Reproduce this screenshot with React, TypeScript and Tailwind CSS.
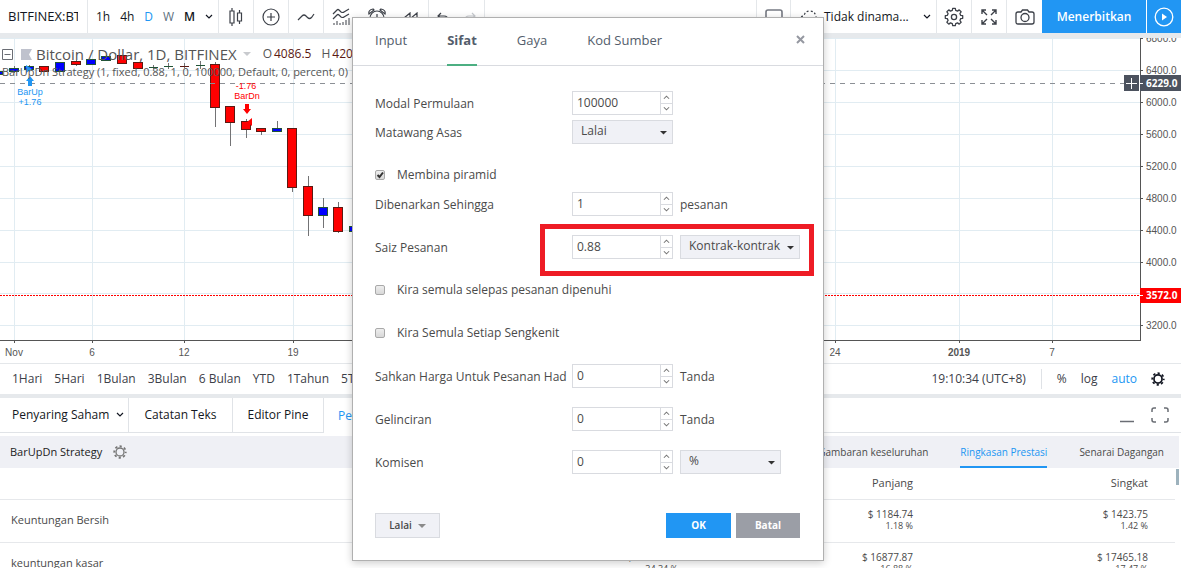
import type { ReactNode } from "react";
import clsx from "clsx";

// x is the candle centre, the rest are pixel offsets from the top of the chart
interface Candle {
  x: number;
  top: number;
  bottom: number;
  high: number;
  low: number;
  up: boolean;
}

const CANDLES: Candle[] = [
  { x: -2, top: 34, bottom: 36, high: 33, low: 37, up: true },
  { x: 14, top: 31, bottom: 33, high: 28, low: 35, up: true },
  { x: 29, top: 29, bottom: 31, high: 27, low: 33, up: true },
  { x: 44, top: 29, bottom: 33, high: 28, low: 33, up: false },
  { x: 60, top: 25, bottom: 33, high: 24, low: 33, up: true },
  { x: 76, top: 24, bottom: 26, high: 22, low: 28, up: false },
  { x: 91, top: 22, bottom: 26, high: 21, low: 27, up: true },
  { x: 106, top: 19, bottom: 22, high: 17, low: 23, up: true },
  { x: 122, top: 18, bottom: 25, high: 17, low: 26, up: false },
  { x: 138, top: 25, bottom: 30, high: 24, low: 31, up: false },
  { x: 153, top: 29, bottom: 29, high: 27, low: 31, up: true },
  { x: 168, top: 28, bottom: 28, high: 25, low: 31, up: true },
  { x: 184, top: 28, bottom: 28, high: 25, low: 30, up: false },
  { x: 200, top: 27, bottom: 27, high: 23, low: 31, up: true },
  { x: 215, top: 27, bottom: 69, high: 24, low: 89, up: false },
  { x: 230, top: 69, bottom: 84, high: 68, low: 108, up: false },
  { x: 246, top: 84, bottom: 91, high: 81, low: 100, up: false },
  { x: 261, top: 91, bottom: 93, high: 90, low: 97, up: false },
  { x: 277, top: 91, bottom: 93, high: 83, low: 93, up: true },
  { x: 292, top: 91, bottom: 149, high: 90, low: 154, up: false },
  { x: 308, top: 149, bottom: 177, high: 138, low: 198, up: false },
  { x: 323, top: 170, bottom: 177, high: 160, low: 190, up: true },
  { x: 338, top: 170, bottom: 193, high: 164, low: 195, up: false },
  { x: 354, top: 189, bottom: 193, high: 186, low: 196, up: true },
];

const PRICES = [
  { y: 0, label: "6800.0" },
  { y: 32, label: "6400.0" },
  { y: 64, label: "6000.0" },
  { y: 96, label: "5600.0" },
  { y: 128, label: "5200.0" },
  { y: 160, label: "4800.0" },
  { y: 192, label: "4400.0" },
  { y: 224, label: "4000.0" },
  { y: 255, label: "" },
  { y: 287, label: "3200.0" },
];

const DATES = [
  { x: 14, label: "Nov" },
  { x: 92, label: "6" },
  { x: 184, label: "12" },
  { x: 293, label: "19" },
  { x: 835, label: "24" },
  { x: 959, label: "2019", bold: true },
  { x: 1052, label: "7" },
];

const RANGES = ["1Hari", "5Hari", "1Bulan", "3Bulan", "6 Bulan", "YTD", "1Tahun", "5Tahun"];

const RESULTS = [
  {
    label: "Keuntungan Bersih",
    values: [
      ["$ 2608.49", "2.61 %"],
      ["$ 1184.74", "1.18 %"],
      ["$ 1423.75", "1.42 %"],
    ],
  },
  {
    label: "keuntungan kasar",
    values: [
      ["$ 34343.05", "34.34 %"],
      ["$ 16877.87", "16.88 %"],
      ["$ 17465.18", "17.47 %"],
    ],
  },
];

function Chevron({ className }: { className?: string }) {
  return (
    <svg className={className} width="8" height="6" viewBox="0 0 8 6" fill="none" stroke="currentColor" strokeWidth="1.2">
      <path d="M1 1l3 3 3-3" />
    </svg>
  );
}

function Gear({ size, teeth, width }: { size: number; teeth: string; width: number }) {
  return (
    <svg width={size} height={size} viewBox="0 0 16 16" fill="none" stroke="currentColor">
      <circle cx="8" cy="8" r="4.6" strokeWidth={width} />
      <circle cx="8" cy="8" r="6.6" strokeWidth="2" strokeDasharray={teeth} strokeDashoffset="1.3" />
    </svg>
  );
}

function ToolButton({ label, className, children }: { label: string; className?: string; children: ReactNode }) {
  return (
    <button
      type="button"
      aria-label={label}
      className={clsx("flex w-[35px] shrink-0 items-center justify-center border-[#e4e7ea] text-[#3c4048]", className)}
    >
      {children}
    </button>
  );
}

function Toolbar() {
  return (
    <header className="flex h-[33px] shrink-0 items-stretch overflow-hidden bg-white text-[12px] text-[#131722]">
      <div className="flex w-[88px] shrink-0 items-center border-r border-[#e4e7ea] pl-2">
        <input aria-label="Simbol" defaultValue="BITFINEX:BTCUSD" className="w-[70px] bg-transparent text-[13px] outline-none" />
      </div>
      <div className="flex w-[131px] shrink-0 items-center justify-between border-r border-[#e4e7ea] pr-[5px] pl-2">
        <button type="button">1h</button>
        <button type="button">4h</button>
        <button type="button" className="text-[#2196f3]">D</button>
        <button type="button" className="text-[#5d7080]">W</button>
        <button type="button" className="font-semibold">M</button>
        <button type="button" aria-label="Selang masa"><Chevron /></button>
      </div>
      <ToolButton label="Gaya carta" className="border-r">
        <svg width="14" height="18" viewBox="0 0 14 18" fill="none" stroke="currentColor" strokeWidth="1.2">
          <path d="M3 0v3M3 15v3M10.500 2v3M10.500 13v3" />
          <path d="M1 3h4v12H1zM8.500 5h4v8h-4z" />
        </svg>
      </ToolButton>
      <ToolButton label="Bandingkan" className="border-r">
        <svg width="18" height="18" viewBox="0 0 18 18" fill="none" stroke="currentColor" strokeWidth="1.2">
          <circle cx="9" cy="9" r="8" />
          <path d="M9 5v8M5 9h8" />
        </svg>
      </ToolButton>
      <ToolButton label="Garis" className="border-r">
        <svg width="18" height="10" viewBox="0 0 18 10" fill="none" stroke="currentColor" strokeWidth="1.2">
          <path d="M1 8l4-4q2-2 4 0l1.500 1.500q2 2 4 0L17 2" />
        </svg>
      </ToolButton>
      <ToolButton label="Penunjuk">
        <svg width="20" height="18" viewBox="0 0 20 18" fill="none" stroke="currentColor" strokeWidth="1.2">
          <path d="M1 6l4-4q1-1 2 0l2 2q2 1 3 0l5-3M1 11l4-4q1-1 2 0l2 2q2 1 3 0l5-3" />
          <path d="M2 15v2M5 13v4M8 15v2M11 14v3M14 12v5M17 10v7" strokeWidth="1" />
        </svg>
      </ToolButton>
      <ToolButton label="Amaran">
        <svg width="18" height="18" viewBox="0 0 18 18" fill="none" stroke="currentColor" strokeWidth="1.2">
          <circle cx="9" cy="10" r="7" />
          <path d="M9 6v4H6M1 6q-1-4 4-5l1 1zM17 6q1-4-4-5l-1 1z" />
        </svg>
      </ToolButton>
      <ToolButton label="Main semula" className="border-r">
        <svg width="16" height="10" viewBox="0 0 16 10" fill="none" stroke="currentColor" strokeWidth="1.2">
          <path d="M7 1v8L1 6zM14 1v8L8 6z" />
        </svg>
      </ToolButton>
      <div className="flex w-14 shrink-0 items-center justify-around border-r border-[#e4e7ea] text-[#3c4048]">
        <button type="button" aria-label="Buat asal">
          <svg width="12" height="9" viewBox="0 0 12 9" fill="none" stroke="currentColor" strokeWidth="1.2">
            <path d="M4 1L1 4l3 3M1 4h6q4 0 4 4" />
          </svg>
        </button>
        <button type="button" aria-label="Buat semula" className="text-[#c6c9ce]">
          <svg width="12" height="9" viewBox="0 0 12 9" fill="none" stroke="currentColor" strokeWidth="1.2">
            <path d="M8 1l3 3-3 3M11 4H5q-4 0-4 4" />
          </svg>
        </button>
      </div>

      <div className="flex-1" />

      <ToolButton label="Susun atur" className="border-x">
        <svg width="18" height="16" viewBox="0 0 18 16" fill="none" stroke="#757982" strokeWidth="1.6">
          <rect x="1" y="1" width="16" height="14" rx="2" />
        </svg>
      </ToolButton>
      <button type="button" className="flex w-[146px] shrink-0 items-center border-r border-[#e4e7ea] pr-[5px] pl-2">
        <svg width="20" height="14" viewBox="0 0 20 14" fill="none" stroke="#3c4048" strokeWidth="1.2" strokeDasharray="2 2">
          <path d="M4 13q-3-1-3-4t4-3q1-5 6-5t6 6q3 1 2 4t-4 2z" />
        </svg>
        <span className="ml-[5px] text-[12px]">Tidak dinama...</span>
        <Chevron className="ml-auto" />
      </button>
      <ToolButton label="Tetapan" className="border-r">
        <svg width="20" height="20" viewBox="0 0 20 20" fill="none" stroke="currentColor" strokeWidth="1.300" strokeLinejoin="round">
          <path d="M8.300 3.400L8.700 1.300h2.600l.4 2.100 1.800.7 1.700-1.200 1.900 1.900-1.200 1.700.7 1.800 2.100.4v2.600l-2.100.4-.7 1.800 1.200 1.700-1.900 1.900-1.700-1.200-1.800.7-.4 2.100H8.700l-.4-2.100-1.800-.7-1.700 1.200-1.900-1.900 1.200-1.700-.7-1.800-2.100-.4V8.700l2.100-.4.7-1.800-1.200-1.700 1.900-1.900 1.700 1.200z" />
          <circle cx="10" cy="10" r="2.600" />
        </svg>
      </ToolButton>
      <ToolButton label="Skrin penuh" className="border-r">
        <svg width="16" height="16" viewBox="0 0 16 16" fill="none" stroke="currentColor" strokeWidth="1.4">
          <path d="M1 5V1h4M11 1h4v4M15 11v4h-4M5 15H1v-4M1 1l5 5M15 1l-5 5M15 15l-5-5M1 15l5-5" />
        </svg>
      </ToolButton>
      <ToolButton label="Tangkap gambar">
        <svg width="20" height="16" viewBox="0 0 20 16" fill="none" stroke="currentColor" strokeWidth="1.3">
          <path d="M3 3h3l1.500-2h5L14 3h3q2 0 2 2v8q0 2-2 2H3q-2 0-2-2V5q0-2 2-2z" />
          <circle cx="10" cy="8.500" r="4" />
        </svg>
      </ToolButton>
      <button type="button" className="w-[105px] shrink-0 border-r border-white bg-[#2196f3] text-[12px] font-semibold text-white">
        Menerbitkan
      </button>
      <button type="button" aria-label="Siaran langsung" className="flex w-[34px] shrink-0 items-center justify-center bg-[#2196f3] text-white">
        <svg width="20" height="20" viewBox="0 0 20 20" fill="none" stroke="currentColor" strokeWidth="1.3">
          <circle cx="10" cy="10" r="8.800" />
          <path d="M8 6.500v7l5-3.500z" fill="currentColor" stroke="none" />
        </svg>
      </button>
    </header>
  );
}

function Plot() {
  return (
    <svg width="100%" height="325" className="block" fontFamily="Liberation Sans, Arial, sans-serif">
      <g stroke="#e1ecf2" strokeWidth="1" shapeRendering="crispEdges">
        {PRICES.map((p) => (
          <line key={p.y} x1="0" x2="100%" y1={p.y} y2={p.y} />
        ))}
        {DATES.map((d) => (
          <line key={d.x} x1={d.x} x2={d.x} y1="0" y2="302" />
        ))}
      </g>
      {CANDLES.map((c) => (
        <g key={c.x} shapeRendering="crispEdges">
          <line x1={c.x + 0.5} x2={c.x + 0.5} y1={c.high} y2={c.low} stroke="#737375" />
          {c.bottom === c.top ? (
            <rect x={c.x - 4} y={c.top} width="9" height="1" fill={c.up ? "#225437" : "#5b1a13"} />
          ) : (
            <rect
              x={c.x - 4.5}
              y={c.top - 0.5}
              width="9"
              height={c.bottom - c.top + 1}
              fill={c.up ? "#0000ff" : "#ff0000"}
              stroke={c.up ? "#225437" : "#5b1a13"}
            />
          )}
        </g>
      ))}
      <line x1="0" x2="100%" y1="45.5" y2="45.5" stroke="#8c9096" strokeDasharray="5 5" />
      <line x1="0" x2="100%" y1="257.5" y2="257.5" stroke="#ff0000" strokeDasharray="2 1" />

      {/* strategy orders */}
      <g fontSize="9" textAnchor="middle">
        <g fill="#2196f3">
          <path d="M26 27l6 4-6 4zM30 38l4 5h-2v5h-4v-5h-2z" />
          <text x="30" y="57">BarUp</text>
          <text x="30" y="67">+1.76</text>
        </g>
        <g fill="#ff0000">
          <text x="246" y="51">-1.76</text>
          <text x="247" y="61">BarDn</text>
          <path d="M245 66h4v5h2l-4 5-4-5h2zM252 80v8l-5-4z" />
        </g>
      </g>

      {/* time scale */}
      <rect x="0" y="302" width="100%" height="1" fill="#555555" />
      <g fontSize="10" fill="#555555" textAnchor="middle">
        {DATES.map((d) => (
          <g key={d.x}>
            <rect x={d.x} y="303" width="1" height="2" />
            <text x={d.x} y="318" fontWeight={d.bold ? "bold" : "normal"}>{d.label}</text>
          </g>
        ))}
      </g>
    </svg>
  );
}

function PriceScale() {
  return (
    <svg width="41" height="325" className="block shrink-0" fontSize="10" fontFamily="Liberation Sans, Arial, sans-serif">
      <rect x="0" y="0" width="1" height="303" fill="#555555" />
      {PRICES.filter((p) => p.label).map((p) => (
        <g key={p.y} fill="#555555">
          <rect x="0" y={p.y} width="3" height="1" />
          <text x="6" y={p.y + 4}>{p.label}</text>
        </g>
      ))}
      <g fontWeight="bold" fontFamily="Open Sans, sans-serif">
        <rect x="0" y="37" width="41" height="16" fill="#4c525e" />
        <text x="6" y="49" fill="#ffffff">6229.0</text>
        <rect x="0" y="250" width="41" height="15" fill="#ff0000" />
        <text x="6" y="261" fill="#ffffff">3572.0</text>
      </g>
      <path d="M0 45.500h3M0 257.500h3" stroke="#ffffff" />
    </svg>
  );
}

function Chart() {
  return (
    <section className="relative flex border-b border-[#e4e7ea] bg-white">
      <div className="min-w-0 flex-1">
        <Plot />
      </div>
      <PriceScale />
      <button
        type="button"
        aria-label="Tambah amaran"
        className="absolute top-[37px] right-[42px] flex h-4 w-[15px] items-center justify-center bg-[#4c525e] text-white"
      >
        <svg width="11" height="11" viewBox="0 0 11 11" stroke="currentColor">
          <path d="M5.500 0v11M0 5.500h11" />
        </svg>
      </button>
      <div className="absolute top-1.5 left-0.5 text-[#555555]">
        <div className="flex h-5 items-center whitespace-nowrap">
          <svg width="11" height="11" viewBox="0 0 11 11" fill="none" stroke="#6a6d74" className="mr-2">
            <path d="M.5.5h10v10H.5zM2.500 5.500h6" />
          </svg>
          <svg width="11" height="11" viewBox="0 0 11 11" className="mr-1">
            <path d="M0 0h11L8 5.500 11 11H0z" fill="#bfc2cd" />
          </svg>
          <span className="text-[15px]">Bitcoin / Dollar, 1D, BITFINEX</span>
          <svg width="8" height="4" viewBox="0 0 8 4" className="mr-3 ml-1.5">
            <path d="M0 0h8L4 4z" fill="#c8cace" />
          </svg>
          <span className="text-[12px]">O</span>
          <span className="mr-2.5 ml-0.5 text-[12px] text-[#5b1a13]">4086.5</span>
          <span className="text-[12px]">H</span>
          <span className="ml-0.5 text-[12px] text-[#5b1a13]">4200.0</span>
        </div>
        <p className="text-[11px] leading-4 whitespace-nowrap">
          BarUpDn Strategy (1, fixed, 0.88, 1, 0, 100000, Default, 0, percent, 0)
        </p>
      </div>
    </section>
  );
}

function RangeBar() {
  return (
    <div className="flex h-[30px] items-center bg-white text-[12px] text-[#3c4048]">
      <div className="flex gap-3 pl-3 whitespace-nowrap">
        {RANGES.map((r) => (
          <button key={r} type="button">{r}</button>
        ))}
      </div>
      <div className="ml-auto flex h-5 items-center">
        <span className="pr-[15px]">19:10:34 (UTC+8)</span>
        <div className="flex h-full items-center gap-3.5 border-l border-[#dfe2e6] pr-4 pl-[15px]">
          <button type="button">%</button>
          <button type="button">log</button>
          <button type="button" className="text-[#2196f3]">auto</button>
          <button type="button" aria-label="Tetapan skala" className="text-[#131722]">
            <Gear size={14} teeth="2.6 2.584" width={2} />
          </button>
        </div>
      </div>
    </div>
  );
}

function BottomTabs() {
  const tab = "flex items-center border-r border-b border-[#e0e3e7] whitespace-nowrap";
  return (
    <nav className="flex h-[35px] items-stretch bg-white text-[12px] text-[#131722]">
      <button type="button" className={clsx(tab, "w-[129px] justify-between pr-1 pl-3")}>
        Penyaring Saham <Chevron />
      </button>
      <button type="button" className={clsx(tab, "w-[104px] justify-center")}>Catatan Teks</button>
      <button type="button" className={clsx(tab, "w-[91px] justify-center")}>Editor Pine</button>
      <button type="button" className="px-3.5 whitespace-nowrap text-[#2196f3]">Penguji Strategi</button>
      <div className="flex flex-1 items-center justify-end gap-[17px] border-b border-[#e0e3e7] pr-3 text-[#6a6d74]">
        <button type="button" aria-label="Kecilkan" className="flex h-4 items-end">
          <svg width="14" height="3" viewBox="0 0 14 3"><path d="M0 1.500h14" stroke="currentColor" strokeWidth="1.5" /></svg>
        </button>
        <button type="button" aria-label="Besarkan">
          <svg width="18" height="16" viewBox="0 0 18 16" fill="none" stroke="currentColor" strokeWidth="1.5">
            <path d="M1 5V3q0-2 2-2h2M13 1h2q2 0 2 2v2M17 11v2q0 2-2 2h-2M5 15H3q-2 0-2-2v-2" />
          </svg>
        </button>
      </div>
    </nav>
  );
}

function StrategyReport() {
  return (
    <section className="flex-1 bg-white pt-[3px] pr-0.5 text-[11px] text-[#4a4a4a]">
      <div className="flex h-8 items-stretch bg-[#eff0f5] pr-[15px] pl-2.5">
        <div className="flex items-center gap-[11px]">
          <span className="text-[#222222]">BarUpDn Strategy</span>
          <button type="button" aria-label="Tetapan strategi" className="text-[#757575]">
            <Gear size={14} teeth="2.6 2.584" width={1.5} />
          </button>
        </div>
        <div className="ml-auto flex gap-8 text-[10px] whitespace-nowrap">
          <button type="button">Gambaran keseluruhan</button>
          <button type="button" className="border-b-2 border-[#2196f3] pt-0.5 text-[#2196f3]">Ringkasan Prestasi</button>
          <button type="button">Senarai Dagangan</button>
        </div>
      </div>
      <div className="flex items-start">
        <table className="flex-1 table-fixed border-collapse">
          <thead>
            <tr className="h-[31px] border-b border-[#e6e8eb]">
              <th aria-label="Metrik" />
              {["Semua", "Panjang", "Singkat"].map((h) => (
                <th key={h} scope="col" className="w-1/5 pr-[27px] text-right font-medium">{h}</th>
              ))}
            </tr>
          </thead>
          <tbody>
            {RESULTS.map((row) => (
              <tr key={row.label} className="h-[43px] border-b border-[#e6e8eb]">
                <th scope="row" className="pl-[11px] text-left font-normal">{row.label}</th>
                {row.values.map(([amount, percent]) => (
                  <td key={amount} className="pr-[27px] pb-0.5 text-right text-[10px] leading-3">
                    {amount}
                    <div className="text-[9px] leading-3">{percent}</div>
                  </td>
                ))}
              </tr>
            ))}
          </tbody>
        </table>
        <div className="mt-px ml-px h-4 w-[3px] bg-[#9db2bd]" />
      </div>
    </section>
  );
}

function NumberField({ id, value }: { id: string; value: string }) {
  return (
    <div className="flex h-6 w-[101px] shrink-0 border border-[#d9dbe0] bg-white">
      <input id={id} type="text" inputMode="decimal" defaultValue={value} className="min-w-0 flex-1 bg-transparent pl-1 outline-none" />
      <div className="flex w-3 flex-col border-l border-[#d9dbe0] text-[#757575]">
        <button type="button" aria-label="Tambah" className="flex flex-1 items-center justify-center border-b border-[#d9dbe0]">
          <Chevron className="w-[7px] rotate-180" />
        </button>
        <button type="button" aria-label="Kurang" className="flex flex-1 items-center justify-center">
          <Chevron className="w-[7px]" />
        </button>
      </div>
    </div>
  );
}

function SelectField({ id, label, value, className }: { id: string; label?: string; value: string; className: string }) {
  return (
    <div className={clsx("relative shrink-0", className)}>
      <select
        id={id}
        aria-label={label}
        defaultValue={value}
        className="h-6 w-full appearance-none border border-[#d9dbe0] bg-[#f0f1f6] pb-0.5 pl-2 outline-none"
      >
        <option>{value}</option>
      </select>
      <svg width="7" height="4" viewBox="0 0 7 4" className="pointer-events-none absolute top-[11px] right-1.5">
        <path d="M0 0h7L3.500 3.500z" fill="#333333" />
      </svg>
    </div>
  );
}

function Field({ id, label, children }: { id: string; label: string; children: ReactNode }) {
  return (
    <div className="relative flex h-6 items-center">
      <label htmlFor={id} className="w-[197px] shrink-0 pt-px whitespace-nowrap">{label}</label>
      <div className="flex items-center gap-[7px]">{children}</div>
    </div>
  );
}

function CheckField({ label, checked }: { label: string; checked?: boolean }) {
  return (
    <label className="flex h-6 items-center">
      <span className="relative mr-3 flex size-2.5">
        <input
          type="checkbox"
          defaultChecked={checked}
          className="peer size-2.5 appearance-none rounded-[2px] border border-[#a9a9a9] bg-linear-to-b from-[#eeeeee] to-[#d8d8d8]"
        />
        <svg viewBox="0 0 10 10" className="pointer-events-none absolute inset-0 hidden size-2.5 peer-checked:block" fill="none" stroke="#333333" strokeWidth="2">
          <path d="M2.500 5l2 2L8 2.500" />
        </svg>
      </span>
      {label}
    </label>
  );
}

function PropertiesDialog() {
  const tab = "border-b-2 border-transparent";
  return (
    <div className="pointer-events-none absolute inset-0 flex items-start justify-center pt-[17px] pr-[5px]">
      <div
        role="dialog"
        aria-label="Sifat"
        className="pointer-events-auto w-[472px] border border-[#b0b0b0] bg-white text-[12px] text-[#4a4a4a] shadow-[0_2px_8px_rgba(0,0,0,0.2)]"
      >
        <div className="flex h-12 items-stretch border-b border-[#d9dbe0] px-[22px] text-[13px] text-[#535d6b]">
          <div className="-mb-px flex gap-10">
            <button type="button" className={tab}>Input</button>
            <button type="button" className="border-b-2 border-[#4caf82] font-bold">Sifat</button>
            <button type="button" className={tab}>Gaya</button>
            <button type="button" className={tab}>Kod Sumber</button>
          </div>
          <button type="button" aria-label="Tutup" className="-mr-1 ml-auto pb-1 text-[#9598a1]">
            <svg width="9" height="9" viewBox="0 0 9 9" stroke="currentColor" strokeWidth="2">
              <path d="M1 1l7 7M8 1L1 8" />
            </svg>
          </button>
        </div>

        <form className="flex flex-col gap-[19px] px-[22px] pt-[25px]">
          <div className="flex flex-col gap-[5px]">
            <Field id="capital" label="Modal Permulaan">
              <NumberField id="capital" value="100000" />
            </Field>
            <Field id="currency" label="Matawang Asas">
              <SelectField id="currency" value="Lalai" className="w-[101px]" />
            </Field>
          </div>
          <div className="flex flex-col gap-[5px]">
            <CheckField label="Membina piramid" checked />
            <Field id="pyramiding" label="Dibenarkan Sehingga">
              <NumberField id="pyramiding" value="1" />
              <span className="pt-px">pesanan</span>
            </Field>
          </div>
          <Field id="size" label="Saiz Pesanan">
            <NumberField id="size" value="0.88" />
            <SelectField id="size-unit" label="Unit saiz" value="Kontrak-kontrak" className="w-[120px]" />
            {/* highlight around the order size */}
            <div className="pointer-events-none absolute -top-[11px] -right-[13px] h-[52px] w-[274px] border-5 border-[#ee1c25]" />
          </Field>
          <CheckField label="Kira semula selepas pesanan dipenuhi" />
          <CheckField label="Kira Semula Setiap Sengkenit" />
          <Field id="verify" label="Sahkan Harga Untuk Pesanan Had">
            <NumberField id="verify" value="0" />
            <span className="pt-px">Tanda</span>
          </Field>
          <Field id="slippage" label="Gelinciran">
            <NumberField id="slippage" value="0" />
            <span className="pt-px">Tanda</span>
          </Field>
          <Field id="commission" label="Komisen">
            <NumberField id="commission" value="0" />
            <SelectField id="commission-unit" label="Unit komisen" value="%" className="w-[101px]" />
          </Field>
        </form>

        <div className="mt-[39px] mb-[22px] flex h-[25px] gap-[5px] pr-[23px] pl-[22px] text-[10px] font-bold">
          <button type="button" className="mr-auto flex w-[65px] items-center justify-center gap-1.5 border border-[#d9dbe0] bg-[#f0f1f6] font-semibold">
            Lalai
            <svg width="8" height="4" viewBox="0 0 8 4"><path d="M0 0h8L4 4z" fill="#8a8a8a" /></svg>
          </button>
          <button type="button" className="w-[65px] bg-[#2196f3] text-white">OK</button>
          <button type="button" className="w-16 bg-[#9b9ea6] text-white">Batal</button>
        </div>
      </div>
    </div>
  );
}

export default function App() {
  return (
    <div className="relative flex h-screen flex-col overflow-hidden bg-[#e6e9ec] font-['Open_Sans',sans-serif]">
      <Toolbar />
      <div className="mt-[5px] shrink-0">
        <Chart />
        <RangeBar />
      </div>
      <div className="mt-1 flex flex-1 flex-col">
        <BottomTabs />
        <StrategyReport />
      </div>
      <PropertiesDialog />
    </div>
  );
}
